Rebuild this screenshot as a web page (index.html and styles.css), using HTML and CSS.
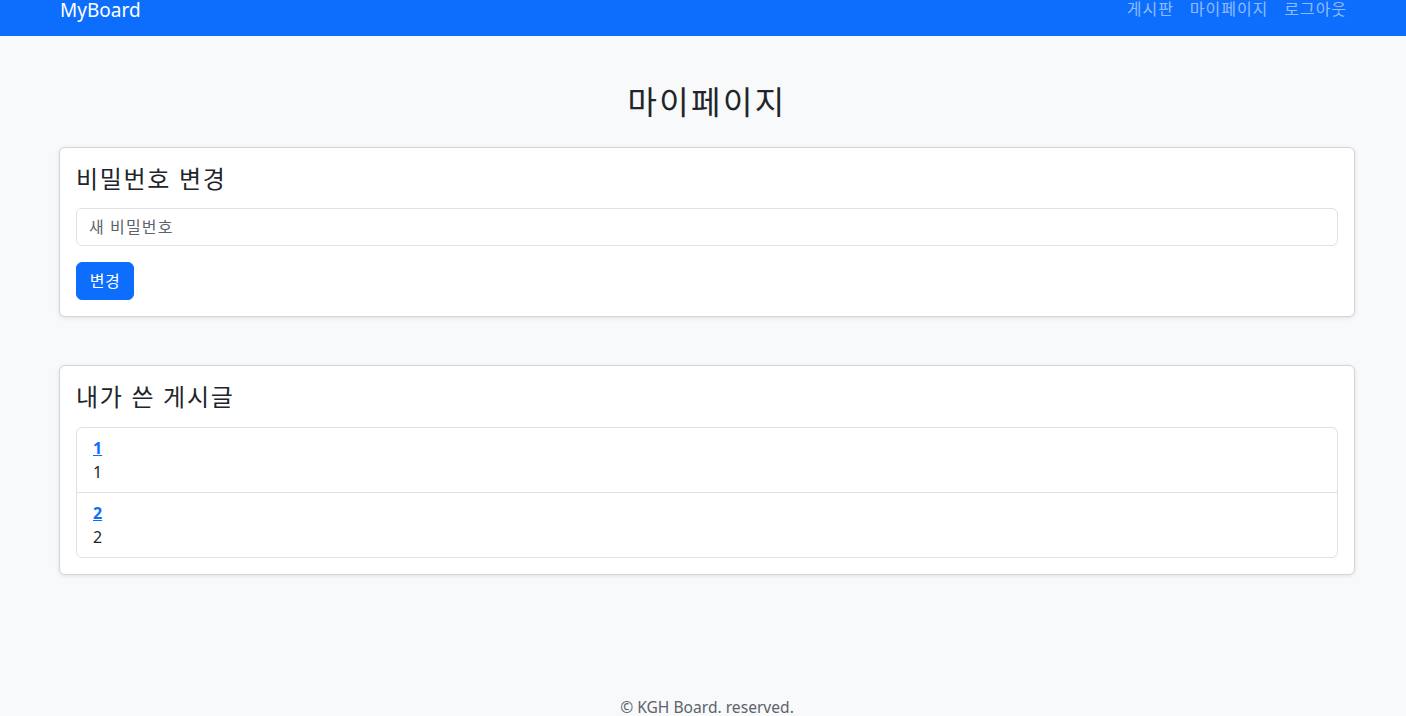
FILE: index.html
```html
<!DOCTYPE html>
<html lang="ko">
<head>
<meta charset="utf-8">
<title>MyBoard</title>
<link rel="stylesheet" href="styles.css">
</head>
<body>
<nav class="navbar">
  <div class="wrap nav-inner">
    <a class="brand" href="#">MyBoard</a>
    <div class="nav-links">
      <a class="nav-link" href="#">게시판</a>
      <a class="nav-link" href="#">마이페이지</a>
      <a class="nav-link" href="#">로그아웃</a>
    </div>
  </div>
</nav>
<main class="wrap main">
  <h2 class="page-title">마이페이지</h2>
  <section class="card">
    <h4 class="card-title">비밀번호 변경</h4>
    <input class="form-control" type="password" placeholder="새 비밀번호">
    <div><button class="btn">변경</button></div>
  </section>
  <section class="card card-posts">
    <h4 class="card-title">내가 쓴 게시글</h4>
    <ul class="list-group">
      <li class="list-item"><a class="post-link" href="#">1</a><div class="post-body">1</div></li>
      <li class="list-item"><a class="post-link" href="#">2</a><div class="post-body">2</div></li>
    </ul>
  </section>
</main>
<footer class="footer">© KGH Board. reserved.</footer>
</body>
</html>
```

FILE: styles.css
```css
* { box-sizing: border-box; }
html, body { margin: 0; padding: 0; }
body {
  background: #f8f9fa;
  color: #212529;
  font-family: "Noto Sans", "Noto Sans CJK KR", sans-serif;
  font-size: 16px;
  line-height: 1.5;
}
.wrap {
  width: 1296px;
  margin-left: 59px;
}
.navbar {
  background: #0d6efd;
  height: 36px;
}
.nav-inner {
  display: flex;
  justify-content: space-between;
  align-items: flex-start;
}
.brand {
  color: #fff;
  font-size: 19px;
  line-height: 20px;
  padding-left: 1px;
  text-decoration: none;
}
.nav-links {
  display: flex;
}
.nav-link {
  color: rgba(255, 255, 255, 0.55);
  text-decoration: none;
  font-size: 16px;
  line-height: 18px;
  letter-spacing: 0.06em;
  padding: 0 8px;
}
.main {
  padding-top: 47px;
}
.page-title {
  margin: 0 0 26px;
  text-align: center;
  font-size: 32px;
  font-weight: 400;
  line-height: 38px;
  letter-spacing: 0.075em;
}
.card {
  background: #fff;
  border: 1px solid #d3d5d8;
  border-radius: 6px;
  box-shadow: 0 1px 4px rgba(0, 0, 0, 0.1);
  padding: 16px;
}
.card-posts { margin-top: 48px; }
.card-title {
  margin: 0 0 15px;
  font-size: 24px;
  font-weight: 400;
  line-height: 29px;
  letter-spacing: 0.07em;
}
.card-posts .card-title { margin-bottom: 16px; }
.form-control {
  display: block;
  width: 100%;
  height: 38px;
  padding: 6px 12px;
  border: 1px solid #dee2e6;
  border-radius: 6px;
  font-family: inherit;
  font-size: 16px;
  color: #212529;
  margin-bottom: 16px;
  letter-spacing: 0.07em;
}
.form-control::placeholder { color: #5c636a; }
.btn {
  background: #0d6efd;
  color: #fff;
  border: 1px solid #0d6efd;
  border-radius: 6px;
  font-family: inherit;
  font-size: 16px;
  line-height: 24px;
  padding: 6px 12px;
  height: 38px;
  width: 58px;
  letter-spacing: 0.04em;
  cursor: pointer;
}
.list-group {
  list-style: none;
  margin: 0;
  padding: 0;
  border: 1px solid #dee2e6;
  border-radius: 6px;
}
.list-item {
  padding: 8px 16px;
  line-height: 24px;
}
.list-item + .list-item { border-top: 1px solid #dee2e6; }
.post-link {
  color: #0d6efd;
  font-weight: 700;
  text-decoration: underline;
}
.footer {
  text-align: center;
  color: #5c636a;
  font-size: 15.6px;
  margin-top: 120px;
  margin-left: 8px;
  line-height: 24px;
}
```
